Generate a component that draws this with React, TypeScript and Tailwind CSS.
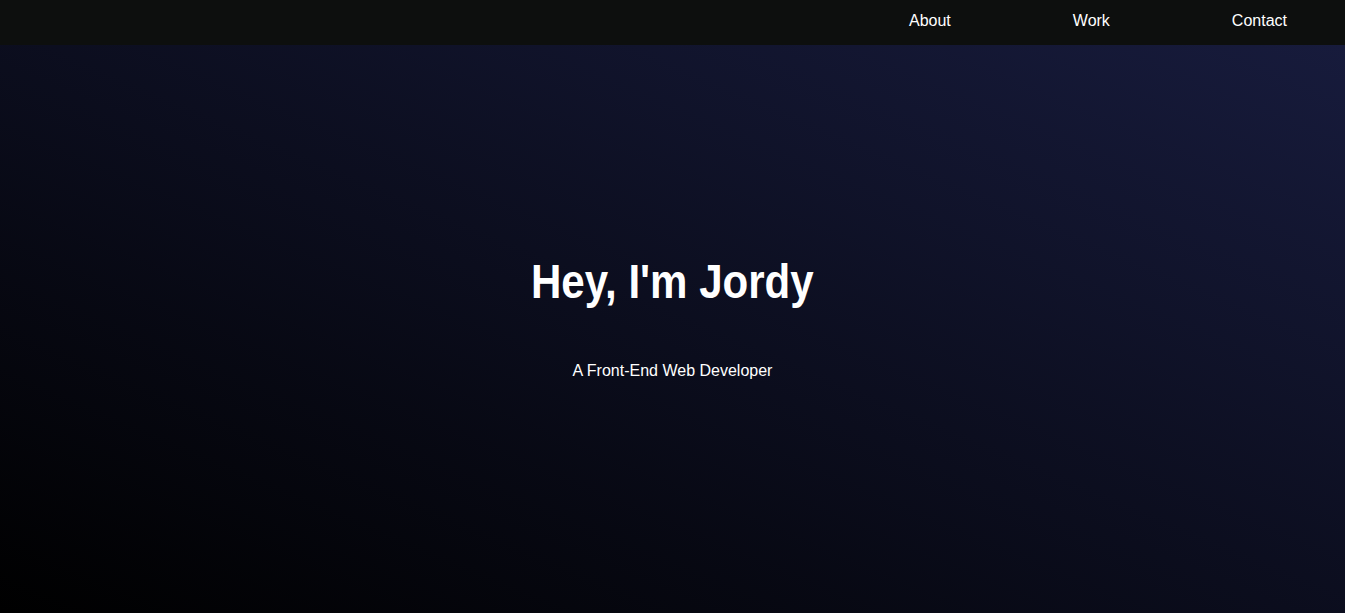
export default function App() {
  return (
    <div className="w-full h-[613px] flex flex-col overflow-hidden">
      <nav className="h-[45px] bg-[#0d0f0e] flex items-center justify-end pr-[58px] pb-[4px] shrink-0">
        <ul className="flex gap-[122px] text-white text-[16px] leading-[18px] font-['Liberation_Sans',Arial,sans-serif]">
          <li>About</li>
          <li>Work</li>
          <li>Contact</li>
        </ul>
      </nav>
      <main className="flex-1 bg-[linear-gradient(to_top_right,#000000,#171b3c)] flex flex-col items-center text-white">
        <h1 className="mt-[209px] text-[48px] leading-[56px] font-bold font-['Liberation_Sans_Narrow','Arial_Narrow','Liberation_Sans',sans-serif] scale-x-[0.876]">
          Hey, I'm Jordy
        </h1>
        <p className="mt-[52px] text-[16px] leading-[18px] font-['Liberation_Sans',Arial,sans-serif]">
          A Front-End Web Developer
        </p>
      </main>
    </div>
  );
}
